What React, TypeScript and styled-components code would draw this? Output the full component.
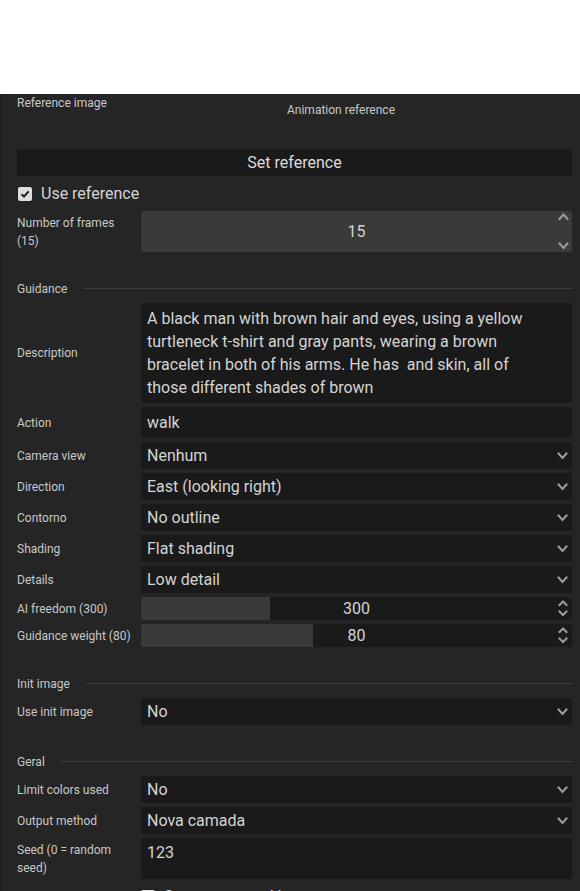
import React from "react";
import styled, { createGlobalStyle } from "styled-components";

const GlobalStyle = createGlobalStyle`
  html, body { margin: 0; padding: 0; background: #ffffff; }
  body { font-family: Roboto, "Liberation Sans", sans-serif; }
`;

const Page = styled.div`
  padding-top: 94px;
`;

const Panel = styled.div`
  background: #252525;
  border-left: 1px solid #1b1b1b;
  padding: 0 8px 20px 16px;
  display: flex;
  flex-direction: column;
  gap: 4px;
  color: #c8c8c8;
`;

const FieldRow = styled.div<{ $top?: boolean }>`
  display: grid;
  grid-template-columns: 124px 1fr;
  align-items: ${(p) => (p.$top ? "start" : "center")};
`;

const Label = styled.div<{ $pad?: number }>`
  font-size: 12px;
  line-height: 18px;
  color: #c8c8c8;
  padding-top: ${(p) => p.$pad ?? 0}px;
  padding-right: 6px;
`;

const RefBox = styled.div`
  width: 400px;
  height: 51px;
  box-sizing: border-box;
  padding-top: 9px;
  text-align: center;
  font-size: 12px;
  line-height: 14px;
  color: #c8c8c8;
`;

const Button = styled.div`
  height: 27px;
  background: #1a1a1a;
  color: #dcdcdc;
  font-size: 16px;
  display: flex;
  align-items: center;
  justify-content: center;
`;

const CheckRow = styled.div<{ $indent?: number }>`
  height: 27px;
  display: flex;
  align-items: center;
  gap: 9px;
  padding-left: ${(p) => p.$indent ?? 1}px;
  font-size: 16px;
  color: #d4d4d4;
`;

const Box = styled.div`
  width: 14px;
  height: 14px;
  border-radius: 2px;
  background: #dedede;
  display: flex;
  align-items: center;
  justify-content: center;
  flex-shrink: 0;
`;

const NumberBox = styled.div<{ $h: number }>`
  height: ${(p) => p.$h}px;
  border-radius: 3px;
  background: #3a3a3a;
  display: grid;
  grid-template-columns: 18px 1fr 18px;
  align-items: center;
  font-size: 16px;
  color: #d4d4d4;
`;

const Centered = styled.div`
  text-align: center;
`;

const SpinCol = styled.div<{ $pad: number }>`
  height: 100%;
  box-sizing: border-box;
  display: flex;
  flex-direction: column;
  justify-content: space-between;
  align-items: center;
  padding: ${(p) => p.$pad}px 0;
`;

const SectionHeader = styled.div`
  height: 21px;
  margin-top: 22px;
  display: flex;
  align-items: center;
  gap: 16px;
  font-size: 12px;
  color: #c8c8c8;
  &::after {
    content: "";
    flex: 1;
    height: 1px;
    background: #3b3b3b;
    margin-right: -1px;
  }
`;

const TextArea = styled.div`
  height: 100px;
  box-sizing: border-box;
  border-radius: 3px;
  background: #1a1a1a;
  padding: 4px 6px;
  font-size: 16px;
  line-height: 23px;
  color: #d4d4d4;
  white-space: pre;
`;

const TextInput = styled.div<{ $h: number; $top?: boolean }>`
  height: ${(p) => p.$h}px;
  box-sizing: border-box;
  border-radius: 3px;
  background: #1a1a1a;
  padding: ${(p) => (p.$top ? "5px 6px 0" : "0 6px")};
  display: flex;
  align-items: ${(p) => (p.$top ? "flex-start" : "center")};
  font-size: 16px;
  line-height: 20px;
  color: #d4d4d4;
`;

const Select = styled.div`
  height: 27px;
  box-sizing: border-box;
  background: #1a1a1a;
  padding: 0 4px 0 6px;
  display: flex;
  align-items: center;
  justify-content: space-between;
  font-size: 16px;
  color: #d4d4d4;
`;

const Slider = styled.div<{ $pct: number }>`
  height: 23px;
  border-radius: 3px;
  background: linear-gradient(
    to right,
    #3a3a3a 0,
    #3a3a3a ${(p) => p.$pct}%,
    #1a1a1a ${(p) => p.$pct}%,
    #1a1a1a 100%
  );
  display: grid;
  grid-template-columns: 18px 1fr 18px;
  align-items: center;
  font-size: 16px;
  color: #d4d4d4;
`;

const Icon = styled.svg`
  display: block;
  fill: none;
  stroke: #9c9c9c;
  stroke-width: 2;
  stroke-linecap: square;
`;

const ChevronDown = ({ w = 11, h = 6 }: { w?: number; h?: number }) => (
  <Icon width={w} height={h + 2} viewBox={`0 0 ${w} ${h + 2}`}>
    <polyline points={`1.5,1.5 ${w / 2},${h} ${w - 1.5},1.5`} />
  </Icon>
);

const ChevronUp = ({ w = 11, h = 6 }: { w?: number; h?: number }) => (
  <Icon width={w} height={h + 2} viewBox={`0 0 ${w} ${h + 2}`}>
    <polyline points={`1.5,${h} ${w / 2},1.5 ${w - 1.5},${h}`} />
  </Icon>
);

const Check = () => (
  <svg width="10" height="10" viewBox="0 0 10 10">
    <polyline
      points="1.5,5.2 4,7.6 8.6,2.4"
      fill="none"
      stroke="#1e1e1e"
      strokeWidth="2"
    />
  </svg>
);

const selects: [string, string][] = [
  ["Camera view", "Nenhum"],
  ["Direction", "East (looking right)"],
  ["Contorno", "No outline"],
  ["Shading", "Flat shading"],
  ["Details", "Low detail"],
];

const sliders = [
  { label: "AI freedom (300)", value: 300, max: 1000 },
  { label: "Guidance weight (80)", value: 80, max: 200 },
];

const description =
  "A black man with brown hair and eyes, using a yellow\nturtleneck t-shirt and gray pants, wearing a brown\nbracelet in both of his arms. He has  and skin, all of\nthose different shades of brown";

const SelectField = ({ label, value }: { label: string; value: string }) => (
  <FieldRow>
    <Label>{label}</Label>
    <Select>
      <span>{value}</span>
      <ChevronDown />
    </Select>
  </FieldRow>
);

export default function App() {
  return (
    <>
      <GlobalStyle />
      <Page>
        <Panel>
          <FieldRow $top>
            <Label $pad={0}>Reference image</Label>
            <RefBox>Animation reference</RefBox>
          </FieldRow>
          <Button>Set reference</Button>
          <CheckRow>
            <Box>
              <Check />
            </Box>
            <span>Use reference</span>
          </CheckRow>
          <FieldRow>
            <Label>
              Number of frames
              <br />
              (15)
            </Label>
            <NumberBox $h={41}>
              <span />
              <Centered>15</Centered>
              <SpinCol $pad={2}>
                <ChevronUp />
                <ChevronDown />
              </SpinCol>
            </NumberBox>
          </FieldRow>

          <SectionHeader>Guidance</SectionHeader>
          <FieldRow>
            <Label>Description</Label>
            <TextArea>{description}</TextArea>
          </FieldRow>
          <FieldRow>
            <Label>Action</Label>
            <TextInput $h={31}>walk</TextInput>
          </FieldRow>
          {selects.map(([l, v]) => (
            <SelectField key={l} label={l} value={v} />
          ))}
          {sliders.map((s) => (
            <FieldRow key={s.label}>
              <Label>{s.label}</Label>
              <Slider $pct={(s.value / s.max) * 100}>
                <span />
                <Centered>{s.value}</Centered>
                <SpinCol $pad={3}>
                  <ChevronUp w={10} h={5} />
                  <ChevronDown w={10} h={5} />
                </SpinCol>
              </Slider>
            </FieldRow>
          ))}

          <SectionHeader>Init image</SectionHeader>
          <SelectField label="Use init image" value="No" />

          <SectionHeader>Geral</SectionHeader>
          <SelectField label="Limit colors used" value="No" />
          <SelectField label="Output method" value="Nova camada" />
          <FieldRow>
            <Label>
              Seed (0 = random
              <br />
              seed)
            </Label>
            <TextInput $h={41} $top>
              123
            </TextInput>
          </FieldRow>
          <FieldRow>
            <span />
            <CheckRow $indent={0}>
              <Box />
              <span>Save generated images</span>
            </CheckRow>
          </FieldRow>
        </Panel>
      </Page>
    </>
  );
}
